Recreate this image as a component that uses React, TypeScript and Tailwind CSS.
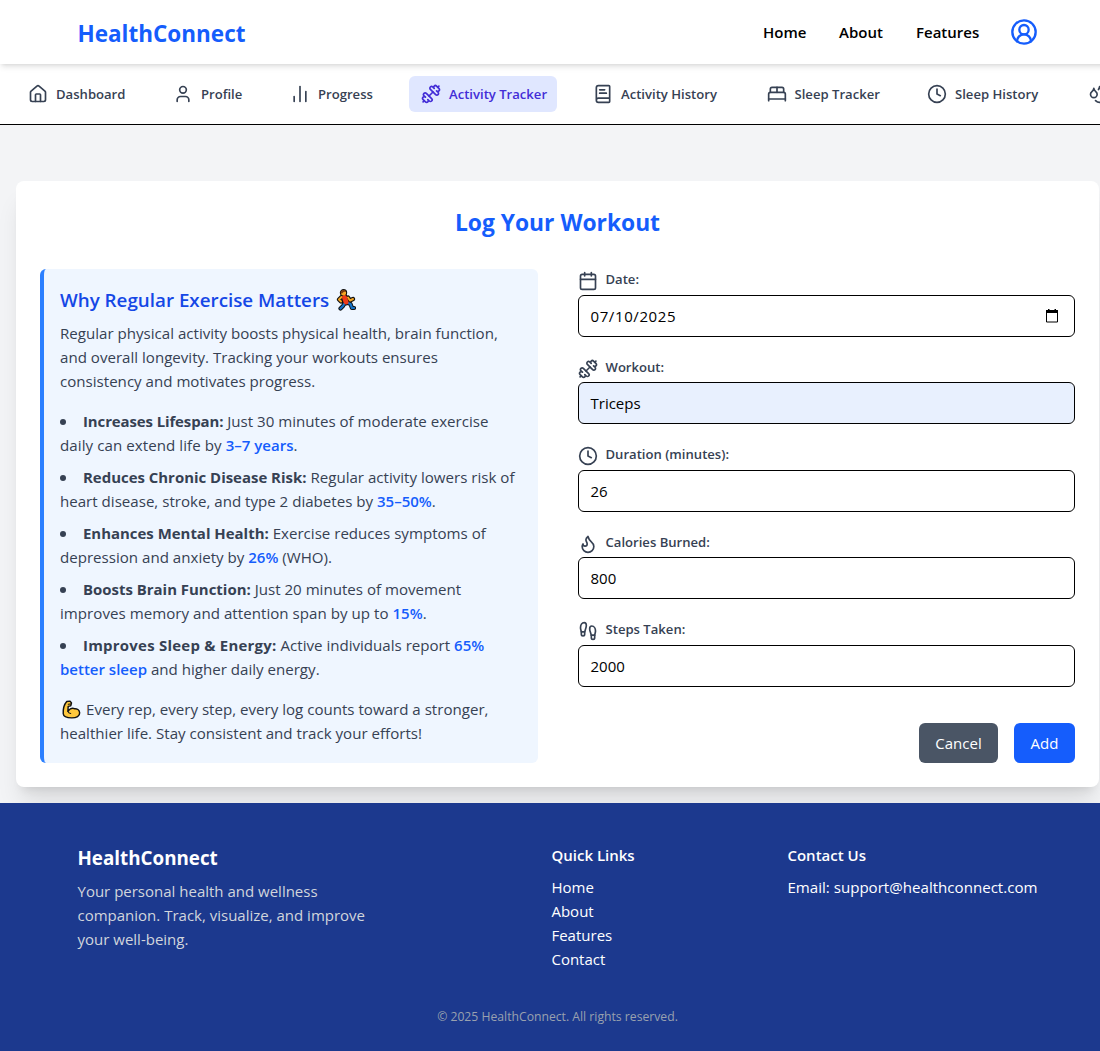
import React from "react";
import {
  House, User, ChartNoAxesColumn, Dumbbell, BookText, BedDouble, Clock, Droplets,
  CircleUserRound, Calendar, Flame, Footprints,
} from "lucide-react";

const tabs = [
  { label: "Dashboard", icon: House, w: "w-[121px]" },
  { label: "Profile", icon: User, w: "w-[93px]" },
  { label: "Progress", icon: ChartNoAxesColumn, w: "w-[107px]" },
  { label: "Activity Tracker", icon: Dumbbell, w: "w-[148px]", active: true },
  { label: "Activity History", icon: BookText, w: "w-[149.5px]" },
  { label: "Sleep Tracker", icon: BedDouble, w: "w-[136.5px]" },
  { label: "Sleep History", icon: Clock, w: "w-[137px]" },
];

const fields = [
  { label: "Date:", icon: Calendar, value: "07/10/2025", date: true },
  { label: "Workout:", icon: Dumbbell, value: "Triceps", filled: true },
  { label: "Duration (minutes):", icon: Clock, value: "26" },
  { label: "Calories Burned:", icon: Flame, value: "800" },
  { label: "Steps Taken:", icon: Footprints, value: "2000" },
];

function Stat({ children }: { children: React.ReactNode }) {
  return <span className="text-[15px] font-semibold text-blue-600">{children}</span>;
}

function Fact({ title, spacing = "", children }: { title: string; spacing?: string; children: React.ReactNode }) {
  return (
    <li>
      <span className="mr-[17px] mb-0.5 inline-block size-1.5 rounded-full bg-gray-700 align-middle" />
      <strong className={`text-[14.95px] font-bold ${spacing}`}>{title}</strong> {children}
    </li>
  );
}

function Runner() {
  return (
    <svg viewBox="0 0 20 22" className="ml-[7px] inline-block h-[22px] w-5" strokeLinecap="round" strokeLinejoin="round" fill="none">
      <g stroke="#111" strokeWidth="4.2">
        <path d="M5.5 8 3 10.500l2 2M12 8.500l2 3 3-1.500M8.500 14.500 7 17l-2.500 2.500M11 13.500l3.500 1.500 1.500 4h2" />
        <path d="M8.500 8.500 10 13" strokeWidth="7" />
        <circle cx="7.500" cy="3.800" r="1.600" fill="#111" />
      </g>
      <path d="M5.500 8 3 10.500l2 2M12 8.500l2 3 3-1.500" stroke="#f5a623" strokeWidth="2" />
      <path d="M8.500 14.500 7 17l-2.500 2.500M11 13.500l3.500 1.500 1.500 4h2" stroke="#1673c9" strokeWidth="2.200" />
      <path d="M8.500 8.500 10 13" stroke="#f03a17" strokeWidth="5" />
      <circle cx="7.500" cy="3.800" r="2.600" fill="#f5a623" />
      <path d="M4.700 4.500c-.5-4 5-4.500 5.500-1.500-2-.5-3 0-4 1.500Z" fill="#7a3b12" />
    </svg>
  );
}

function Biceps() {
  return (
    <svg viewBox="0 0 20 20" className="mr-[5px] ml-0.5 inline-block size-[19px] align-[-4px]" strokeLinecap="round" strokeLinejoin="round">
      <path d="M5 1.500 8.500 1.200l1.500 2-.8 3-2.700.5-.3 5.300c1.500-2.600 4.500-4 6.800-2.800 2.800-.3 5.300 1.500 5.600 4.300.2 3.500-3.300 5.300-8.300 5.300-4.500 0-8.800-1.500-9-4.300C1 9.500 2.300 4.500 5 1.500Z" fill="#ffc83d" stroke="#111" strokeWidth="1.500" />
      <path d="M6.200 12c.5 1.300 1.500 2 3 2.200M6.500 4.500l2.500-.3" stroke="#111" strokeWidth="1.100" fill="none" />
    </svg>
  );
}

export default function App() {
  return (
    <div className="h-[1051px] overflow-hidden bg-gray-100 font-['Open_Sans','Noto_Sans',sans-serif]">
      <div className="w-[1115px]">
        <header className="relative z-10 h-16 bg-white shadow-md">
          <div className="mx-auto flex h-full max-w-5xl items-center justify-between px-8">
            <div className="pt-[3px] text-[22.5px] font-bold text-blue-600">HealthConnect</div>
            <nav className="flex items-center text-[15px] font-semibold text-black">
              <a className="w-[76px]">Home</a>
              <a className="w-[77px]">About</a>
              <a className="w-[93.5px]">Features</a>
              <CircleUserRound className="size-7 text-blue-600" />
            </nav>
          </div>
        </header>

        <nav className="flex h-[61px] gap-6 overflow-hidden border-b border-black bg-white px-4 py-3">
          {tabs.map(({ label, icon: Icon, w, active }) => (
            <a key={label} className={`${w} ${active ? "bg-indigo-100 text-indigo-700" : "text-gray-700"} flex h-9 shrink-0 items-center gap-2 rounded-md px-3 text-[13.1px] font-semibold whitespace-nowrap`}>
              <Icon className="size-5 shrink-0" />
              <span className="pt-px">{label}</span>
            </a>
          ))}
          <a className="flex h-9 shrink-0 items-center px-3 text-gray-700">
            <Droplets className="size-5" />
          </a>
        </nav>

        <main className="h-[678px] px-4 pt-14">
          <section className="h-[606px] rounded-lg bg-white p-6 shadow-xl">
            <h1 className="text-center text-[22.8px] leading-9 font-bold text-blue-600">Log Your Workout</h1>
            <div className="mt-7 grid grid-cols-2 gap-10">
              <article className="h-[494px] rounded-md border-l-4 border-blue-500 bg-blue-50 p-4 text-[15.1px] leading-6 whitespace-nowrap text-gray-700">
                <h2 className="mb-1.5 flex h-[30px] items-center text-[18.8px] leading-[30px] font-semibold text-blue-700">Why Regular Exercise Matters<Runner /></h2>
                <p>Regular physical activity boosts physical health, brain function,<br />and overall longevity. Tracking your workouts ensures<br />consistency and motivates progress.</p>
                <ul className="my-4 space-y-2">
                  <Fact title="Increases Lifespan:" spacing="tracking-[-0.1px]">Just 30 minutes of moderate exercise<br /><span className="tracking-[0.07px]">daily can extend life by </span><Stat>3–7 years</Stat>.</Fact>
                  <Fact title="Reduces Chronic Disease Risk:">Regular activity lowers risk of<br />heart disease, stroke, and type 2 diabetes by <Stat>35–50%</Stat>.</Fact>
                  <Fact title="Enhances Mental Health:">Exercise reduces symptoms of<br />depression and anxiety by <Stat>26%</Stat> (WHO).</Fact>
                  <Fact title="Boosts Brain Function:">Just 20 minutes of movement<br /><span className="tracking-[0.03px]">improves memory and attention span by up to </span><Stat>15%</Stat>.</Fact>
                  <Fact title="Improves Sleep &amp; Energy:" spacing="tracking-[0.25px]">Active individuals report <Stat>65%<br />better sleep</Stat> and higher daily energy.</Fact>
                </ul>
                <p><Biceps />Every rep, every step, every log counts toward a stronger,<br />healthier life. Stay consistent and track your efforts!</p>
              </article>

              <form className="flex flex-col">
                {fields.map(({ label, icon: Icon, value, date, filled }) => (
                  <div key={label} className="h-[87.5px]">
                    <label className="flex h-[25.9px] gap-2 text-[13.1px] leading-5 font-semibold text-gray-700">
                      <Icon className="mt-0.5 size-5" />
                      {label}
                    </label>
                    <div className={`${filled ? "bg-[#e8f0fe]" : "bg-white"} flex h-[42px] items-center justify-between rounded-md border border-black px-3 text-[15px] text-black`}>
                      <span className={date ? "tracking-[0.6px]" : ""}>{value}</span>
                      {date && (
                        <svg viewBox="0 0 14 14" className="mr-[3px] size-3.5">
                          <path d="M1.500 1.500h11v11.500h-11z" fill="none" stroke="#000" />
                          <path d="M1 1h12v3H1zM3 0h1.500v2H3zM9.500 0H11v2H9.500z" />
                        </svg>
                      )}
                    </div>
                  </div>
                ))}
                <div className="mt-4 flex justify-end gap-4 text-[15px] text-white">
                  <button type="button" className="h-10 w-[79px] rounded-md bg-gray-600 pt-0.5">Cancel</button>
                  <button type="button" className="h-10 w-[61px] rounded-md bg-blue-600 pt-0.5">Add</button>
                </div>
              </form>
            </div>
          </section>
        </main>

        <footer className="h-[248px] bg-[#1c398e] pt-10 text-[15px] leading-6 text-white">
          <div className="mx-auto flex max-w-5xl px-8 whitespace-nowrap">
            <div className="w-[474px]">
              <h3 className="mb-[7px] pt-px text-[18.8px] leading-7 font-bold">HealthConnect</h3>
              <p className="text-gray-300">Your personal health and wellness<br />companion. Track, visualize, and improve<br />your well-being.</p>
            </div>
            <div className="w-[236px]">
              <h4 className="mb-2 font-semibold">Quick Links</h4>
              <ul><li>Home</li><li>About</li><li>Features</li><li>Contact</li></ul>
            </div>
            <div>
              <h4 className="mb-2 font-semibold">Contact Us</h4>
              <p className="text-[15.1px]">Email: support@healthconnect.com</p>
            </div>
          </div>
          <p className="mt-9 text-center text-[12.2px] leading-5 text-gray-400">© 2025 HealthConnect. All rights reserved.</p>
        </footer>
      </div>
    </div>
  );
}
